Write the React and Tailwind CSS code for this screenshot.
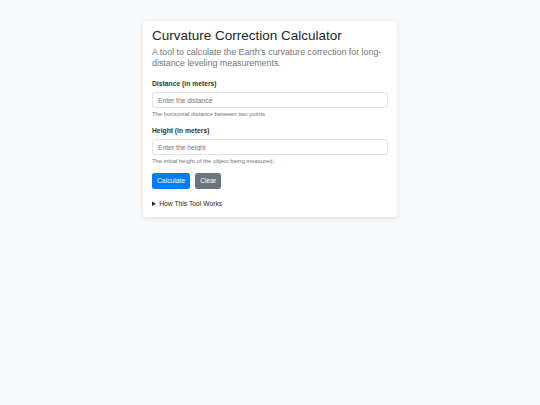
export default function App() {
    return (
        <div className="min-h-screen bg-[#f8f9fa] pt-[21px] font-['Liberation_Sans',Arial,sans-serif] text-[#212529]">
            <div className="mx-auto w-[254px] rounded-[3px] bg-white px-[9px] pt-[7px] pb-[8px] shadow-[0_1px_5px_rgba(0,0,0,0.12)]">
                <h2 className="text-[13.5px] leading-[16.2px] font-normal text-[#212529]">Curvature Correction Calculator</h2>
                <p className="mt-[3px] text-[8.85px] leading-[10.3px] text-[#6c757d]">
                    A tool to calculate the Earth's curvature correction for long-distance leveling measurements.
                </p>

                <form onSubmit={(e) => e.preventDefault()}>
                    <div className="mt-[11.3px]">
                        <label htmlFor="distance" className="block text-[6.75px] leading-[10px] font-bold text-[#333]">Distance (in meters)</label>
                        <input
                            id="distance"
                            type="number"
                            placeholder="Enter the distance"
                            className="mt-[3px] block h-[16px] w-full rounded-[2.5px] border border-[#dee2e6] px-[5px] text-[6.75px] text-[#495057] placeholder:text-[#6c757d] outline-none"
                        />
                        <p className="mt-[2px] text-[5.9px] leading-[9px] text-[#6c757d]">The horizontal distance between two points.</p>
                    </div>

                    <div className="mt-[7px]">
                        <label htmlFor="height" className="block text-[6.75px] leading-[10px] font-bold text-[#333]">Height (in meters)</label>
                        <input
                            id="height"
                            type="number"
                            placeholder="Enter the height"
                            className="mt-[3px] block h-[16px] w-full rounded-[2.5px] border border-[#dee2e6] px-[5px] text-[6.75px] text-[#495057] placeholder:text-[#6c757d] outline-none"
                        />
                        <p className="mt-[2px] text-[5.9px] leading-[9px] text-[#6c757d]">The initial height of the object being measured.</p>
                    </div>

                    <div className="mt-[7px] flex gap-[5px]">
                        <button type="submit" className="h-[16px] rounded-[2.5px] bg-[#007bff] px-[5px] text-[6.75px] leading-[16px] text-white">Calculate</button>
                        <button type="reset" className="h-[16px] rounded-[2.5px] bg-[#6c757d] px-[5px] text-[6.75px] leading-[16px] text-white">Clear</button>
                    </div>
                </form>

                <details className="mt-[10px]">
                    <summary className="cursor-pointer text-[6.75px] leading-[10px] text-[#212529]">How This Tool Works</summary>
                    <p className="mt-[4px] text-[6.75px] leading-[10px] text-[#6c757d]">
                        The Earth's curvature makes distant points appear lower than they are. The correction is computed from the distance and the Earth's radius.
                    </p>
                </details>
            </div>
        </div>
    );
}
